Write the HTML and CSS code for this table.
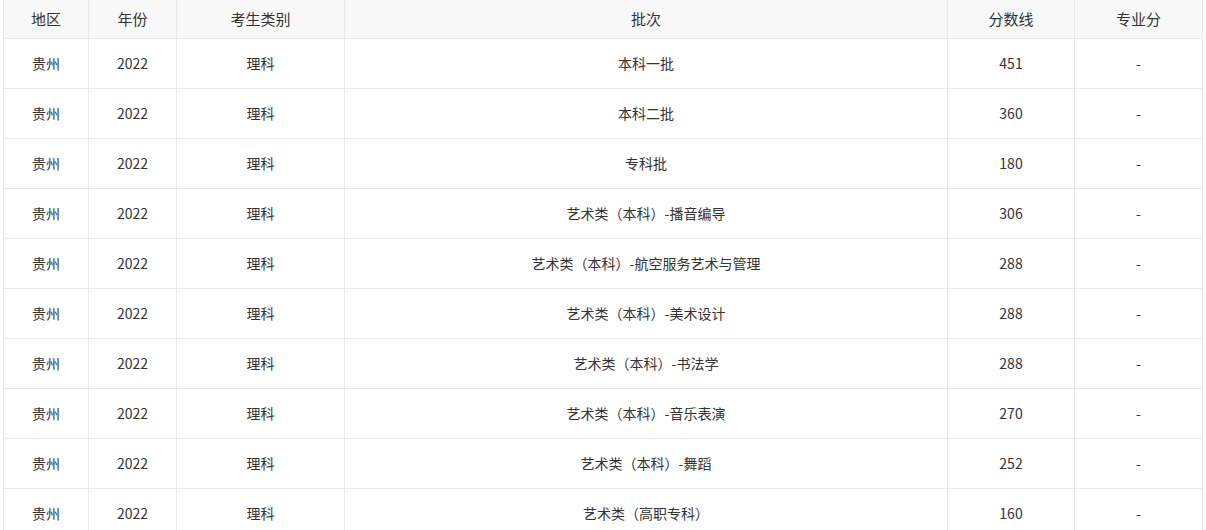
FILE: index.html
```html
<!DOCTYPE html>
<html lang="zh-CN">
<head>
<meta charset="utf-8">
<title>分数线</title>
<link rel="stylesheet" href="styles.css">
</head>
<body>
<table class="score-table">
  <colgroup>
    <col class="c-area">
    <col class="c-year">
    <col class="c-type">
    <col class="c-batch">
    <col class="c-score">
    <col class="c-major">
  </colgroup>
  <thead>
    <tr><th>地区</th><th>年份</th><th>考生类别</th><th>批次</th><th>分数线</th><th>专业分</th></tr>
  </thead>
  <tbody>
    <tr><td>贵州</td><td>2022</td><td>理科</td><td>本科一批</td><td>451</td><td>-</td></tr>
    <tr><td>贵州</td><td>2022</td><td>理科</td><td>本科二批</td><td>360</td><td>-</td></tr>
    <tr><td>贵州</td><td>2022</td><td>理科</td><td>专科批</td><td>180</td><td>-</td></tr>
    <tr><td>贵州</td><td>2022</td><td>理科</td><td>艺术类（本科）-播音编导</td><td>306</td><td>-</td></tr>
    <tr><td>贵州</td><td>2022</td><td>理科</td><td>艺术类（本科）-航空服务艺术与管理</td><td>288</td><td>-</td></tr>
    <tr><td>贵州</td><td>2022</td><td>理科</td><td>艺术类（本科）-美术设计</td><td>288</td><td>-</td></tr>
    <tr><td>贵州</td><td>2022</td><td>理科</td><td>艺术类（本科）-书法学</td><td>288</td><td>-</td></tr>
    <tr><td>贵州</td><td>2022</td><td>理科</td><td>艺术类（本科）-音乐表演</td><td>270</td><td>-</td></tr>
    <tr><td>贵州</td><td>2022</td><td>理科</td><td>艺术类（本科）-舞蹈</td><td>252</td><td>-</td></tr>
    <tr><td>贵州</td><td>2022</td><td>理科</td><td>艺术类（高职专科）</td><td>160</td><td>-</td></tr>
  </tbody>
</table>
</body>
</html>
```
FILE: styles.css
```css
html, body {
  margin: 0;
  padding: 0;
  background: #fff;
}
body {
  font-family: "Noto Sans CJK SC", "Noto Sans", sans-serif;
  color: #333;
}
.score-table {
  margin-left: 3px;
  border-collapse: separate;
  border-spacing: 0;
  table-layout: fixed;
  width: 1200px;
  border-left: 1px solid #e8e8e8;
}
.c-area { width: 85px; }
.c-year { width: 88px; }
.c-type { width: 168px; }
.c-batch { width: 603px; }
.c-score { width: 127px; }
.c-major { width: 128px; }
.score-table th,
.score-table td {
  padding: 0;
  text-align: center;
  border-right: 1px solid #e8e8e8;
  border-bottom: 1px solid #e8e8e8;
  box-sizing: border-box;
}
.score-table th {
  font-size: 15px;
  font-weight: normal;
  background: #f8f8f8;
  height: 39px;
  line-height: 38px;
}
.score-table td {
  font-size: 14px;
  height: 50px;
  line-height: 49px;
}
```
